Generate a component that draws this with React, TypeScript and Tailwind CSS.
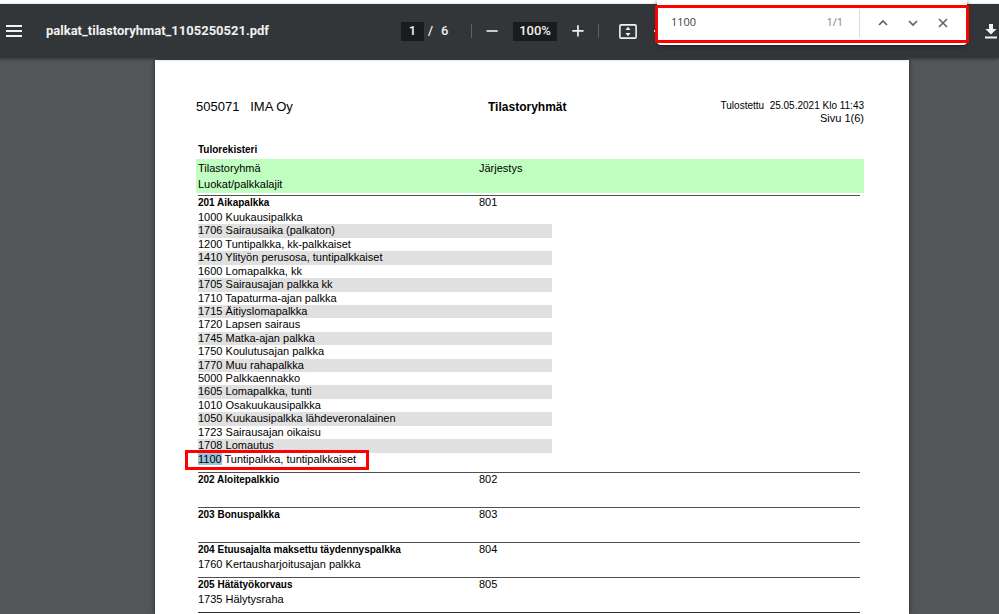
import { clsx } from 'clsx';

type Item = { code: string; name: string };
type Group = { title: string; order: number; items: Item[] };

const groups: Group[] = [
  {
    title: '201 Aikapalkka',
    order: 801,
    items: [
      { code: '1000', name: 'Kuukausipalkka' },
      { code: '1706', name: 'Sairausaika (palkaton)' },
      { code: '1200', name: 'Tuntipalkka, kk-palkkaiset' },
      { code: '1410', name: 'Ylityön perusosa, tuntipalkkaiset' },
      { code: '1600', name: 'Lomapalkka, kk' },
      { code: '1705', name: 'Sairausajan palkka kk' },
      { code: '1710', name: 'Tapaturma-ajan palkka' },
      { code: '1715', name: 'Äitiyslomapalkka' },
      { code: '1720', name: 'Lapsen sairaus' },
      { code: '1745', name: 'Matka-ajan palkka' },
      { code: '1750', name: 'Koulutusajan palkka' },
      { code: '1770', name: 'Muu rahapalkka' },
      { code: '5000', name: 'Palkkaennakko' },
      { code: '1605', name: 'Lomapalkka, tunti' },
      { code: '1010', name: 'Osakuukausipalkka' },
      { code: '1050', name: 'Kuukausipalkka lähdeveronalainen' },
      { code: '1723', name: 'Sairausajan oikaisu' },
      { code: '1708', name: 'Lomautus' },
      { code: '1100', name: 'Tuntipalkka, tuntipalkkaiset' },
    ],
  },
  { title: '202 Aloitepalkkio', order: 802, items: [] },
  { title: '203 Bonuspalkka', order: 803, items: [] },
  {
    title: '204 Etuusajalta maksettu täydennyspalkka',
    order: 804,
    items: [{ code: '1760', name: 'Kertausharjoitusajan palkka' }],
  },
  {
    title: '205 Hätätyökorvaus',
    order: 805,
    items: [{ code: '1735', name: 'Hälytysraha' }],
  },
];

const query = '1100';

function Toolbar() {
  return (
    <header className="relative z-10 flex h-[54px] items-center bg-[#323639] font-['Roboto',sans-serif] text-[13px] font-medium text-[#f1f1f1] shadow-[0_1px_3px_rgba(0,0,0,0.4)]">
      <div className="flex w-[401px] shrink-0 items-center gap-6 pl-1.5">
        <button type="button" aria-label="Valikko">
          <svg width="16" height="14" viewBox="0 0 16 14" fill="currentColor">
            <path d="M0 1h16v2H0zM0 6h16v2H0zM0 11h16v2H0z" />
          </svg>
        </button>
        <h1 className="font-bold">palkat_tilastoryhmat_1105250521.pdf</h1>
      </div>
      <div className="flex shrink-0 items-center">
        <input
          aria-label="Sivunumero"
          defaultValue="1"
          className="h-[19px] w-[23px] bg-[#191b1c] text-center outline-none"
        />
        <span className="ml-1">/</span>
        <span className="ml-2 w-[8px]">6</span>
        <span className="ml-[22px] h-[14px] w-px bg-[#5f6366]" />
        <button type="button" aria-label="Loitonna" className="ml-[14px]">
          <svg width="12" height="12" viewBox="0 0 12 12" fill="currentColor">
            <path d="M.5 5.2h11.2v1.6H.5z" />
          </svg>
        </button>
        <input
          aria-label="Zoomaus"
          defaultValue="100%"
          className="ml-[15px] h-[19px] w-[44px] bg-[#191b1c] text-center outline-none"
        />
        <button type="button" aria-label="Lähennä" className="ml-[15px]">
          <svg width="12" height="12" viewBox="0 0 12 12" fill="currentColor">
            <path d="M5.1.3h1.7v4.8h4.8v1.7H6.8v4.8H5.1V6.8H.3V5.1h4.8z" />
          </svg>
        </button>
        <span className="ml-[14px] h-[14px] w-px bg-[#5f6366]" />
        <button type="button" aria-label="Sovita sivulle" className="ml-5">
          <svg width="18" height="15" viewBox="0 0 18 15">
            <rect x="0.9" y="0.9" width="16.2" height="13.2" rx="1.2" fill="none" stroke="currentColor" strokeWidth="1.6" />
            <path d="M9 2.8l2.6 3.2H6.4zM9 12.2L6.4 9h5.2z" fill="currentColor" />
          </svg>
        </button>
        <button type="button" aria-label="Kierrä" className="ml-4">
          <svg width="14" height="14" viewBox="0 0 14 14" fill="none" stroke="currentColor" strokeWidth="2">
            <path d="M1 7h5M7 2a5 5 0 1 1 0 10" />
          </svg>
        </button>
      </div>
      <button type="button" aria-label="Lataa" className="mr-0.5 ml-auto">
        <svg width="12" height="15" viewBox="0 0 12 15" fill="currentColor">
          <path d="M4 0h4v5h3.6L6 10.6.4 5H4zM0 12.6h12v1.8H0z" />
        </svg>
      </button>
    </header>
  );
}

function FindBar() {
  return (
    <div className="absolute top-0 right-8 z-20 w-[310px]">
      <div className="flex h-[45px] items-center rounded-b-[4px] bg-white pr-[19px] pl-3.5 text-[#5f6368] shadow-[0_1px_4px_rgba(0,0,0,0.5)]">
        <input
          aria-label="Etsi"
          defaultValue={query}
          className="min-w-0 flex-1 font-['Open_Sans',sans-serif] text-[11px] text-[#3c4043] outline-none"
        />
        <span className="font-['Open_Sans',sans-serif] text-[11px] text-[#80868b]">1/1</span>
        <span className="ml-4 h-7 w-px bg-[#dadce0]" />
        <button type="button" aria-label="Edellinen" className="ml-[18px]">
          <svg width="10" height="10" viewBox="0 0 10 10" fill="none" stroke="currentColor" strokeWidth="1.7">
            <path d="M1 7l4-4 4 4" />
          </svg>
        </button>
        <button type="button" aria-label="Seuraava" className="ml-5">
          <svg width="10" height="10" viewBox="0 0 10 10" fill="none" stroke="currentColor" strokeWidth="1.7">
            <path d="M1 3l4 4 4-4" />
          </svg>
        </button>
        <button type="button" aria-label="Sulje" className="ml-5">
          <svg width="10" height="10" viewBox="0 0 10 10" fill="none" stroke="currentColor" strokeWidth="1.6">
            <path d="M1 1l8 8M9 1L1 9" />
          </svg>
        </button>
      </div>
      <div className="pointer-events-none absolute -inset-x-0.5 top-[5px] h-[38px] border-3 border-[#ff0000]" />
    </div>
  );
}

function ItemRow({ item, shaded }: { item: Item; shaded: boolean }) {
  const found = item.code === query;
  return (
    <li className={clsx('relative w-[354px] leading-[13px]', shaded && 'bg-[#e0e0e0]')}>
      {found ? <mark className="bg-[#9cc3dc] text-inherit">{item.code}</mark> : item.code} {item.name}
      {found && (
        <span className="pointer-events-none absolute -top-[3px] -left-[13px] h-[20px] w-[184px] border-3 border-[#ff0000]" />
      )}
    </li>
  );
}

function GroupRows({ group }: { group: Group }) {
  const long = group.items.length > 1;
  return (
    <tbody>
      <tr>
        <th scope="row" className="p-0 text-left text-[10px] font-bold">
          <div className="ml-0.5 h-4 border-t border-[#505050] leading-[13px]">{group.title}</div>
        </th>
        <td className="p-0">
          <div className="mr-1 h-4 border-t border-[#505050] leading-[13px]">{group.order}</div>
        </td>
      </tr>
      <tr>
        <td colSpan={2} className="p-0 pb-1.5 pl-0.5">
          <ul className={clsx('grid auto-rows-fr', long ? 'min-h-[255px]' : 'min-h-[13px]')}>
            {group.items.map((item, i) => (
              <ItemRow key={item.code} item={item} shaded={i % 2 === 1} />
            ))}
          </ul>
        </td>
      </tr>
    </tbody>
  );
}

export default function App() {
  return (
    <div className="relative flex h-screen flex-col overflow-hidden bg-white pt-1">
      <Toolbar />
      <FindBar />
      <main className="min-h-0 flex-1 overflow-hidden bg-[#525659] pt-0.5 pr-[90px] pl-[155px]">
        <article className="min-h-full bg-white pt-[39px] pr-[45px] pl-[41px] font-['Liberation_Sans',Arial,sans-serif] text-[11px] text-black shadow-[0_0_4px_rgba(0,0,0,0.6)]">
          <div className="flex h-[44px] items-start">
            <p className="w-[292px] text-[13px] leading-4 whitespace-pre">505071   IMA Oy</p>
            <h2 className="text-[12px] leading-4 font-bold">Tilastoryhmät</h2>
            <div className="ml-auto text-right leading-[13px] whitespace-pre">
              <p className="text-[10px]">Tulostettu  25.05.2021 Klo 11:43</p>
              <p>Sivu 1(6)</p>
            </div>
          </div>
          <h3 className="h-4 pl-0.5 text-[10px] leading-[14px] font-bold">Tulorekisteri</h3>
          <table className="w-full table-fixed border-collapse">
            <colgroup>
              <col className="w-[283px]" />
              <col />
            </colgroup>
            <thead>
              <tr className="border-b-2 border-white bg-[#c0ffc0] text-left align-top leading-4">
                <th className="p-0 pt-px pb-px pl-0.5 font-normal">
                  Tilastoryhmä
                  <br />
                  Luokat/palkkalajit
                </th>
                <th className="p-0 pt-px font-normal">Järjestys</th>
              </tr>
            </thead>
            {groups.map((group) => (
              <GroupRows key={group.title} group={group} />
            ))}
          </table>
          <hr className="mr-1 ml-0.5 border-[#303030]" />
        </article>
      </main>
    </div>
  );
}
